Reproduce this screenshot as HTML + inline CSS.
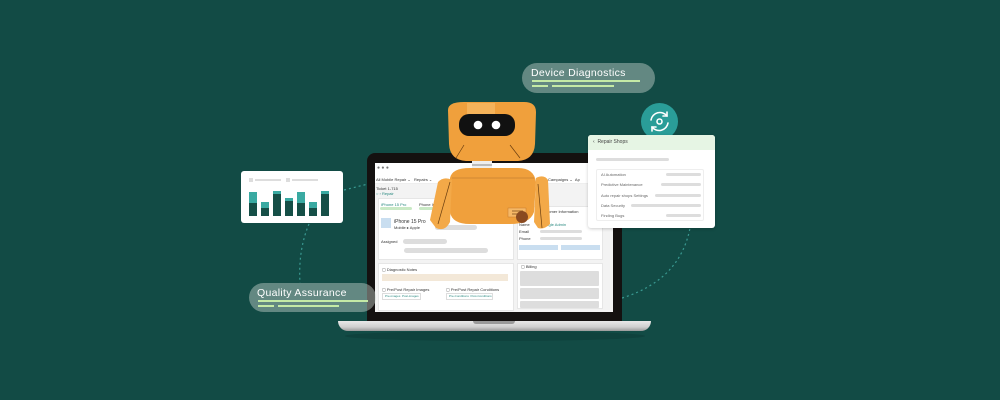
<!DOCTYPE html>
<html><head><meta charset="utf-8"><style>
*{margin:0;padding:0;box-sizing:border-box}
body{width:1000px;height:400px;background:#124b45;position:relative;overflow:hidden;font-family:"Liberation Sans",sans-serif}
.a{position:absolute}
.g{background:#ddd;border-radius:3px}
.t{font-size:4px;color:#333;white-space:nowrap}
</style></head><body>
<svg class="a" style="left:0;top:0" width="1000" height="400">
<g fill="none" stroke="#3a9a92" stroke-width="1.2" stroke-dasharray="2 3">
<path d="M344 190 Q360 186 368 184"/>
<path d="M309 224 Q298 250 300 283"/>
<path d="M622 298 Q680 280 690 228"/>
</g></svg>

<div class="a" style="left:345px;top:331px;width:300px;height:10px;background:#0f423d;border-radius:50%"></div>
<div class="a" style="left:367px;top:153px;width:255px;height:169px;background:#141110;border-radius:8px 8px 0 0"></div>
<div class="a" style="left:375px;top:163px;width:238px;height:149px;background:#f3f3f3;overflow:hidden">
  <div class="a" style="left:0;top:0;width:238px;height:11px;background:#fff"></div>
  <div class="a t" style="left:2px;top:2px;font-size:5px;color:#777">● ● ●</div>
  <div class="a" style="left:0;top:11px;width:238px;height:10px;background:#fff;border-bottom:1px solid #eee"></div>
  <div class="a t" style="left:1px;top:14px">All Mobile Repair ⌄ &nbsp; Repairs ⌄</div>
  <div class="a t" style="left:173px;top:14px">Campaigns ⌄ &nbsp;Ap</div>
  <div class="a t" style="left:1px;top:23px">Ticket 1-715</div>
  <div class="a t" style="left:1px;top:28px;color:#2a8a80">○ › Repair</div>
  <div class="a" style="left:3px;top:35px;width:136px;height:62px;background:#fff;border:1px solid #e6e6e6"></div>
  <div class="a t" style="left:6px;top:39px;color:#2a8a80">iPhone 15 Pro</div>
  <div class="a" style="left:5px;top:44px;width:32px;height:3px;background:#c9e9c5;border-radius:2px"></div>
  <div class="a t" style="left:44px;top:39px">Phone Information</div>
  <div class="a" style="left:44px;top:44px;width:30px;height:3px;background:#c9e9c5;border-radius:2px"></div>
  <div class="a" style="left:6px;top:55px;width:10px;height:10px;background:#c9def0"></div>
  <div class="a t" style="left:19px;top:56px;font-size:5px">iPhone 15 Pro</div>
  <div class="a t" style="left:19px;top:62px">Mobile ▸ Apple</div>
  <div class="a g" style="left:60px;top:62px;width:42px;height:5px"></div>
  <div class="a t" style="left:6px;top:76px">Assigned</div>
  <div class="a g" style="left:28px;top:76px;width:44px;height:5px"></div>
  <div class="a g" style="left:29px;top:85px;width:84px;height:5px"></div>
  <div class="a" style="left:3px;top:100px;width:136px;height:48px;background:#fff;border:1px solid #e6e6e6"></div>
  <div class="a t" style="left:7px;top:104px">▢ Diagnostic Notes</div>
  <div class="a" style="left:7px;top:111px;width:126px;height:7px;background:#f3e8d8"></div>
  <div class="a t" style="left:7px;top:124px">▢ Pre/Post Repair Images</div>
  <div class="a t" style="left:71px;top:124px">▢ Pre/Post Repair Conditions</div>
  <div class="a" style="left:7px;top:130px;width:39px;height:7px;border:1px solid #ddd;font-size:3px;line-height:5px;color:#2a8a80;padding-left:2px">Pre-images &nbsp;Post-images</div>
  <div class="a" style="left:71px;top:130px;width:47px;height:7px;border:1px solid #ddd;font-size:3px;line-height:5px;color:#2a8a80;padding-left:2px">Pre-Conditions &nbsp;Post-Conditions</div>
  <div class="a" style="left:142px;top:43px;width:86px;height:54px;background:#fff;border:1px solid #e6e6e6"></div>
  <div class="a t" style="left:165px;top:46px">Customer Information</div>
  <div class="a t" style="left:144px;top:59px">Name</div><div class="a t" style="left:166px;top:59px;color:#2a8a80">Google Admin</div>
  <div class="a t" style="left:144px;top:66px">Email</div><div class="a g" style="left:165px;top:67px;width:42px;height:3px"></div>
  <div class="a t" style="left:144px;top:73px">Phone</div><div class="a g" style="left:165px;top:74px;width:42px;height:3px"></div>
  <div class="a" style="left:144px;top:82px;width:39px;height:5px;background:#c9def0"></div>
  <div class="a" style="left:186px;top:82px;width:39px;height:5px;background:#c9def0"></div>
  <div class="a" style="left:142px;top:100px;width:86px;height:46px;background:#fff;border:1px solid #e6e6e6"></div>
  <div class="a t" style="left:146px;top:101px">▢ Billing</div>
  <div class="a g" style="left:145px;top:108px;width:79px;height:15px;border-radius:1px"></div>
  <div class="a g" style="left:145px;top:125px;width:79px;height:11px;border-radius:1px"></div>
  <div class="a g" style="left:145px;top:138px;width:79px;height:7px;border-radius:1px"></div>
</div>
<div class="a" style="left:338px;top:321px;width:313px;height:10px;background:linear-gradient(#e8e8e8,#cfcfcf 60%,#9a9a9a);border-radius:0 0 10px 10px"></div>
<div class="a" style="left:473px;top:321px;width:42px;height:3px;background:#9a9a9a;border-radius:0 0 4px 4px"></div>

<div class="a" style="left:241px;top:171px;width:102px;height:52px;background:#fff;border-radius:3px">
  <div class="a" style="left:8px;top:7px;width:4px;height:4px;background:#ddd"></div>
  <div class="a" style="left:14px;top:8px;width:26px;height:2px;background:#ddd"></div>
  <div class="a" style="left:45px;top:7px;width:4px;height:4px;background:#ddd"></div>
  <div class="a" style="left:51px;top:8px;width:26px;height:2px;background:#ddd"></div>
  <svg class="a" style="left:0;top:0" width="102" height="52">
  <g fill="#164f47"><rect x="8" y="32" width="8" height="13"/><rect x="20" y="37" width="8" height="8"/><rect x="32" y="23" width="8" height="22"/><rect x="44" y="30" width="8" height="15"/><rect x="56" y="32" width="8" height="13"/><rect x="68" y="37" width="8" height="8"/><rect x="80" y="23" width="8" height="22"/></g>
  <g fill="#3aaaa2"><rect x="8" y="21" width="8" height="11"/><rect x="20" y="31" width="8" height="6"/><rect x="32" y="20" width="8" height="3"/><rect x="44" y="27" width="8" height="3"/><rect x="56" y="21" width="8" height="11"/><rect x="68" y="31" width="8" height="6"/><rect x="80" y="20" width="8" height="3"/></g>
  </svg>
</div>

<div class="a" style="left:249px;top:283px;width:127px;height:29px;background:rgba(200,210,205,0.45);border-radius:15px">
  <div class="a" style="left:8px;top:4px;font-size:10.5px;color:#fff;letter-spacing:0.3px">Quality Assurance</div>
  <div class="a" style="left:9px;top:17px;width:110px;height:2px;background:#c4eaa6"></div>
  <div class="a" style="left:9px;top:22px;width:16px;height:2px;background:#c4eaa6"></div>
  <div class="a" style="left:29px;top:22px;width:61px;height:2px;background:#c4eaa6"></div>
</div>

<div class="a" style="left:522px;top:63px;width:133px;height:30px;background:rgba(200,210,205,0.45);border-radius:15px">
  <div class="a" style="left:9px;top:4px;font-size:10.5px;color:#fff;letter-spacing:0.3px">Device Diagnostics</div>
  <div class="a" style="left:10px;top:17px;width:108px;height:2px;background:#c4eaa6"></div>
  <div class="a" style="left:10px;top:22px;width:16px;height:2px;background:#c4eaa6"></div>
  <div class="a" style="left:30px;top:22px;width:62px;height:2px;background:#c4eaa6"></div>
</div>

<div class="a" style="left:641px;top:103px;width:37px;height:37px;background:#2a9d98;border-radius:50%"></div>
<svg class="a" style="left:641px;top:103px" width="37" height="37" fill="none" stroke="#fff" stroke-width="1.6" stroke-linecap="round">
<path d="M10 17 A9 9 0 0 1 26 13"/><path d="M26 9 L26 13 L22 13"/>
<path d="M27 20 A9 9 0 0 1 11 24"/><path d="M11 28 L11 24 L15 24"/>
<circle cx="18.5" cy="18.5" r="2.5"/>
</svg>

<div class="a" style="left:588px;top:135px;width:127px;height:93px;background:#fff;border-radius:3px;overflow:hidden;box-shadow:0 1px 3px rgba(0,0,0,.2)">
  <div class="a" style="left:0;top:0;width:127px;height:15px;background:#e6f5e4"></div>
  <div class="a t" style="left:5px;top:4px;font-size:5px;color:#444">‹ &nbsp;Repair Shops</div>
  <div class="a g" style="left:8px;top:23px;width:73px;height:3px"></div>
  <div class="a" style="left:8px;top:34px;width:108px;height:52px;border:1px solid #eee;border-radius:2px"></div>
  <div class="a t" style="left:13px;top:37px;color:#666">AI Automation</div><div class="a g" style="left:78px;top:38px;width:35px;height:3px"></div>
  <div class="a t" style="left:13px;top:47px;color:#666">Predictive Maintenance</div><div class="a g" style="left:73px;top:48px;width:40px;height:3px"></div>
  <div class="a t" style="left:13px;top:58px;color:#666">Auto repair shops Settings</div><div class="a g" style="left:67px;top:59px;width:46px;height:3px"></div>
  <div class="a t" style="left:13px;top:68px;color:#666">Data Security</div><div class="a g" style="left:43px;top:69px;width:70px;height:3px"></div>
  <div class="a t" style="left:13px;top:78px;color:#666">Finding Bugs</div><div class="a g" style="left:78px;top:79px;width:35px;height:3px"></div>
</div>

<svg class="a" style="left:430px;top:100px" width="130" height="130">
 <rect x="42" y="56" width="20" height="14" fill="#eee"/>
 <rect x="42" y="59" width="20" height="2" fill="#bbb"/><rect x="42" y="64" width="20" height="2" fill="#bbb"/>
 <path d="M20 78 Q22 68 40 68 L88 68 Q104 68 106 82 L104 112 Q100 124 80 124 L40 124 Q22 124 20 112 Z" fill="#f0a03c"/>
 <path d="M22 78 L104 78" stroke="#b0702a" stroke-width="0.6"/>
 <rect x="78" y="108" width="18" height="9" fill="#f6b866" stroke="#c47a2c" stroke-width="0.5"/>
 <path d="M82 111 H93 M82 114 H93" stroke="#7a4a1a" stroke-width="0.8"/>
 <path d="M8 82 Q14 76 22 80 L20 122 Q15 132 6 128 L0 120 Z" fill="#f3a948"/>
 <path d="M20 82 L8 124" stroke="#6a3e10" stroke-width="0.7"/>
 <path d="M106 78 Q114 74 118 80 L120 124 Q114 130 108 128 L104 122 Z" fill="#f3a948"/>
 <path d="M108 84 L112 128" stroke="#6a3e10" stroke-width="0.7"/>
 <circle cx="92" cy="117" r="6" fill="#8a4a20"/>
 <path d="M18 10 Q18 2 34 2 L94 2 Q106 2 106 12 L105 44 Q104 60 88 61 L36 61 Q20 60 19 44 Z" fill="#f0a03c"/>
 <rect x="37" y="3" width="28" height="22" fill="#f5b35a"/>
 <rect x="29" y="14" width="56" height="22" rx="10" fill="#111"/>
 <circle cx="48" cy="25" r="4.3" fill="#fff"/><circle cx="66" cy="25" r="4.3" fill="#fff"/>
 <path d="M34 45 L26 58 M80 45 L90 58" stroke="#6a3e10" stroke-width="0.7"/>
</svg>
</body></html>
